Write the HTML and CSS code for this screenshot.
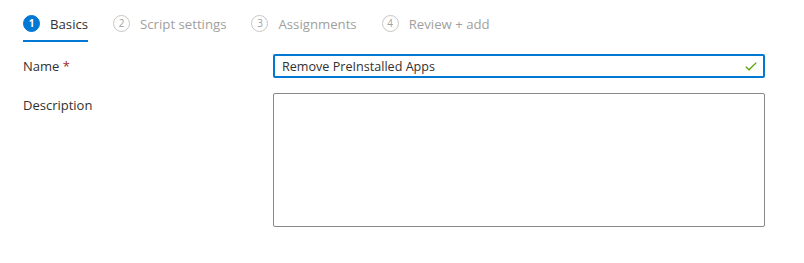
FILE: index.html
```html
<!DOCTYPE html>
<html>
<head>
<meta charset="utf-8">
<link rel="stylesheet" href="styles.css">
</head>
<body>
<div class="page">
  <nav class="steps">
    <div class="step active"><span class="num">1</span><span class="label">Basics</span></div>
    <div class="step"><span class="num">2</span><span class="label">Script settings</span></div>
    <div class="step"><span class="num">3</span><span class="label">Assignments</span></div>
    <div class="step"><span class="num">4</span><span class="label">Review + add</span></div>
  </nav>
  <div class="form">
    <div class="row row-name">
      <label class="field-label">Name <span class="req">*</span></label>
      <div class="input valid">
        <span class="value">Remove PreInstalled Apps</span>
        <svg class="check" width="12" height="9" viewBox="0 0 12 9"><path d="M0.7 4.6 L4 7.8 L11.3 0.6" fill="none" stroke="#57a300" stroke-width="1.3"/></svg>
      </div>
    </div>
    <div class="row row-desc">
      <label class="field-label">Description</label>
      <div class="textarea"></div>
    </div>
  </div>
</div>
</body>
</html>
```
FILE: styles.css
```css
* { box-sizing: border-box; }
html, body { margin: 0; background: #fff; }
body {
  font-family: "Segoe UI", "Open Sans", "Noto Sans", sans-serif;
  font-size: 13px;
  color: #323130;
}
.page { padding: 0 0 0 23px; width: 765px; }
.steps {
  display: flex;
  gap: 25px;
  height: 42px;
  padding-top: 16px;
}
.step {
  display: flex;
  align-items: flex-start;
  gap: 10px;
  color: #a19f9d;
  height: 26px;
}
.step.active {
  color: #323130;
  border-bottom: 2px solid #0078d4;
}
.label { font-size: 13.2px; line-height: 16px; }
.num {
  width: 17px;
  height: 17px;
  border-radius: 50%;
  border: 1px solid #c8c6c4;
  font-size: 10px;
  line-height: 15px;
  text-align: center;
  color: #a19f9d;
  flex: none;
  margin-top: -1px;
}
.step.active .num {
  background: #0078d4;
  border-color: #0078d4;
  color: #fff;
  font-weight: 700;
}
.form { padding-top: 12px; }
.row { display: flex; }
.field-label { width: 250px; flex: none; line-height: 24px; }
.req { color: #a4262c; }
.row-desc { margin-top: 15px; }
.input {
  width: 492px;
  height: 24px;
  border: 2px solid #0078d4;
  border-radius: 2px;
  display: flex;
  align-items: center;
  padding: 0 5px 0 7px;
}
.value { flex: 1; white-space: nowrap; font-size: 12.6px; }
.check { flex: none; margin-right: 1px; }
.textarea {
  width: 492px;
  height: 134px;
  border: 1px solid #8a8886;
  border-radius: 2px;
}
```
